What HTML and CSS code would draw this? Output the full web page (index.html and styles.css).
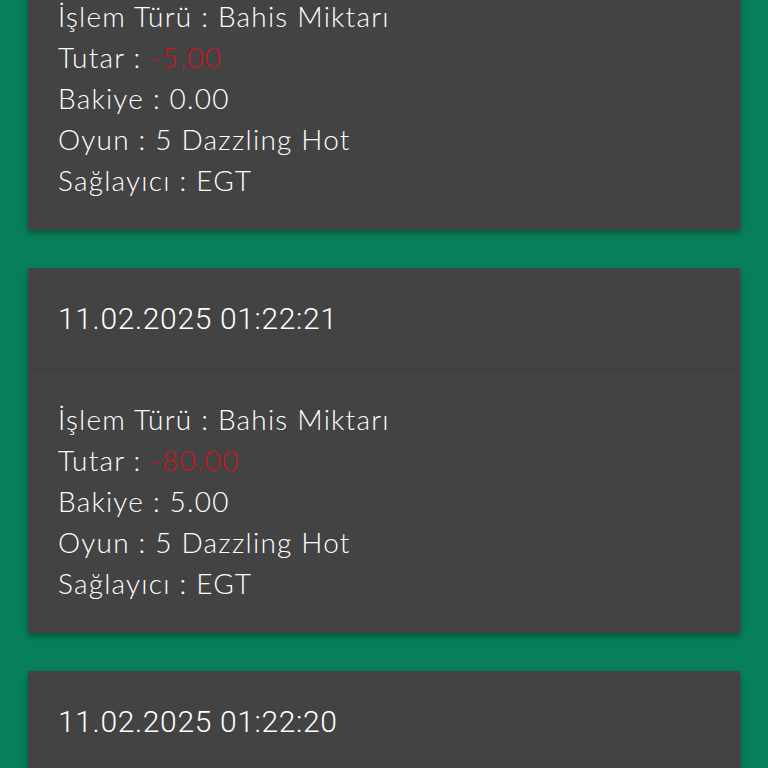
FILE: index.html
```html
<!DOCTYPE html>
<html lang="tr">
<head>
<meta charset="utf-8">
<link rel="stylesheet" href="styles.css">
</head>
<body>
<div class="list">
  <div class="card">
    <div class="card-head">11.02.2025 01:22:22</div>
    <div class="card-body">
      <div>İşlem Türü : Bahis Miktarı</div>
      <div>Tutar : <span class="neg">-5.00</span></div>
      <div>Bakiye : 0.00</div>
      <div>Oyun : 5 Dazzling Hot</div>
      <div>Sağlayıcı : EGT</div>
    </div>
  </div>
  <div class="card">
    <div class="card-head">11.02.2025 01:22:21</div>
    <div class="card-body">
      <div>İşlem Türü : Bahis Miktarı</div>
      <div>Tutar : <span class="neg">-80.00</span></div>
      <div>Bakiye : 5.00</div>
      <div>Oyun : 5 Dazzling Hot</div>
      <div>Sağlayıcı : EGT</div>
    </div>
  </div>
  <div class="card">
    <div class="card-head">11.02.2025 01:22:20</div>
    <div class="card-body">
      <div>İşlem Türü : Bahis Miktarı</div>
      <div>Tutar : <span class="neg">-5.00</span></div>
      <div>Bakiye : 85.00</div>
      <div>Oyun : 5 Dazzling Hot</div>
      <div>Sağlayıcı : EGT</div>
    </div>
  </div>
</div>
</body>
</html>
```
FILE: styles.css
```css
html, body {
  margin: 0;
  padding: 0;
  background: #077f5a;
  overflow: hidden;
  height: 768px;
}
.list {
  display: flex;
  flex-direction: column;
  gap: 38px;
  padding: 0 28px;
  margin-top: -135px;
}
.card {
  background: #434343;
  box-shadow: 0 3px 6px rgba(0, 0, 0, 0.35);
  color: #ffffff;
}
.card-head {
  font-family: Roboto, "Noto Sans", sans-serif;
  font-weight: 300;
  font-size: 30px;
  line-height: 41px;
  letter-spacing: 0.65px;
  padding: 30px 30px;
  border-bottom: 1px solid #3b3b3b;
}
.card-body {
  font-family: Lato, "Noto Sans", sans-serif;
  font-weight: 300;
  font-size: 28px;
  line-height: 41px;
  letter-spacing: 1.2px;
  padding: 29px 30px;
}
.neg {
  color: #d0101f;
}
```
